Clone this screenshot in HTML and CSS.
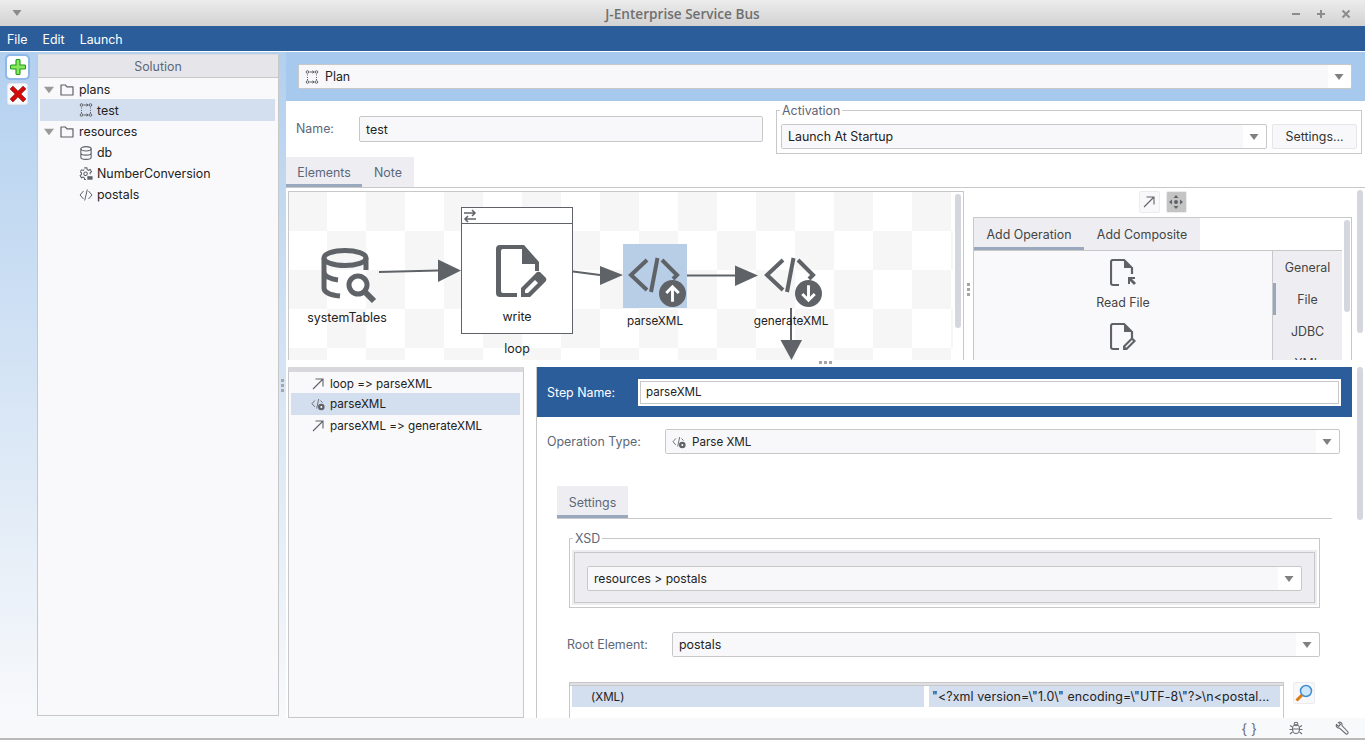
FILE: index.html
```html
<!DOCTYPE html>
<html lang="en">
<head>
    <meta charset="UTF-8">
    <meta name="viewport" content="width=device-width, initial-scale=1.0">
    <title>J-Enterprise Service Bus</title>
    <link rel="stylesheet" href="styles.css">
</head>
<body>
    <svg class="defs" width="0" height="0">
        <symbol id="i-caret" viewBox="0 0 12 8"><path d="M0 0h12L6 8z"/></symbol>
        <symbol id="i-plan" viewBox="0 0 14 14"><g fill="none" stroke="currentColor" stroke-width="1"><circle cx="2.500" cy="2" r="1.300"/><circle cx="11.500" cy="2" r="1.300"/><circle cx="2.500" cy="12" r="1.300"/><circle cx="11.500" cy="12" r="1.300"/><path d="M2.500 4.500v1M2.500 7v1M2.500 9v1M11.500 4.500v1M11.500 7v1M11.500 9v1M4.500 2h4.500M4.500 12h4.500M7.500 .8 9.300 2 7.500 3.200M7.500 10.800 9.300 12l-1.800 1.200"/></g></symbol>
        <symbol id="i-folder" viewBox="0 0 14 12"><path d="M1 11V1h4.300l1.700 1.800h6V11z" fill="none" stroke="currentColor" stroke-width="1.200" stroke-linejoin="round"/></symbol>
        <symbol id="i-db" viewBox="0 0 14 15"><g fill="none" stroke="currentColor" stroke-width="1.200"><ellipse cx="7" cy="3" rx="5.500" ry="2.300"/><path d="M1.500 3v9c0 1.300 2.500 2.300 5.500 2.300s5.500-1 5.500-2.300V3M1.500 7.500c0 1.300 2.500 2.300 5.500 2.300s5.500-1 5.500-2.300"/></g></symbol>
        <symbol id="i-gear" viewBox="0 0 16 16"><path d="M6 1h3l.4 2 1.600.8 1.800-1 1.500 2.400-1.500 1.400v1.800M1.500 5.200 3 3.200l1.800.7L6 3M1.400 5.300l1.400 1.300v2L1.300 9.800l1.500 2.500 1.800-.8 1.400.9.400 1.800H8" fill="none" stroke="currentColor" stroke-width="1.200"/><circle cx="7.500" cy="7.800" r="2" fill="none" stroke="currentColor" stroke-width="1.200"/><rect x="9.500" y="10.500" width="6" height="4" fill="currentColor"/></symbol>
        <symbol id="i-code" viewBox="0 0 14 12"><path d="M4.500 2 1 6l3.500 4M9.500 2 13 6l-3.500 4M8.300 .5 5.700 11.500" fill="none" stroke="currentColor" stroke-width="1"/></symbol>
        <symbol id="i-code-big" viewBox="0 0 52 36"><path d="M19 3 3 18l16 15M34 3l15 15-4 4M29.500 1 23 35" fill="none" stroke="currentColor" stroke-width="4"/></symbol>
        <symbol id="i-parse" viewBox="0 0 14 14"><path d="M3.800 3.500 1 6.700l2.800 3.200M9.500 3.500l2 2.200M7.700 2 5.700 11.500" fill="none" stroke="currentColor" stroke-width=".9"/><circle cx="10.300" cy="10" r="3.300" fill="currentColor"/><circle cx="10.300" cy="10" r="1" fill="#fff"/></symbol>
        <symbol id="i-arrow" viewBox="0 0 14 14"><path d="M2 12 12 2M4.500 2H12v7.500" fill="none" stroke="currentColor" stroke-width="1.100"/></symbol>
    </svg>

    <div class="window">
        <header class="titlebar">
            <svg class="title-menu"><use href="#i-caret"/></svg>
            <span class="title-text">J-Enterprise Service Bus</span>
            <div class="title-buttons">
                <svg viewBox="0 0 10 10"><path d="M1 5h8"/></svg>
                <svg viewBox="0 0 10 10"><path d="M1 5h8M5 1v8"/></svg>
                <svg viewBox="0 0 10 10"><path d="M1.500 1.500l7 7M8.500 1.500l-7 7"/></svg>
            </div>
        </header>

        <nav class="menubar">
            <span>File</span>
            <span>Edit</span>
            <span>Launch</span>
        </nav>

        <div class="main">
            <aside class="side-tools">
                <button class="tool tool-focus">
                    <svg viewBox="0 0 16 16"><path d="M6 1.500a1 1 0 0 1 1-1h2a1 1 0 0 1 1 1V6h4.500a1 1 0 0 1 1 1v2a1 1 0 0 1-1 1H10v4.500a1 1 0 0 1-1 1H7a1 1 0 0 1-1-1V10H1.500a1 1 0 0 1-1-1V7a1 1 0 0 1 1-1H6z" fill="#86e85a" stroke="#1f9a1c" stroke-width="1.100"/></svg>
                </button>
                <button class="tool">
                    <svg viewBox="0 0 16 16"><path d="M1 3.500 3.500 1 8 5.500 12.500 1 15 3.500 10.500 8l4.500 4.500-2.500 2.500L8 10.500 3.500 15 1 12.500 5.500 8z" fill="#d20a0a" stroke="#8a0000" stroke-width=".6"/></svg>
                </button>
            </aside>

            <section class="solution">
                <div class="solution-head">Solution</div>
                <ul class="tree">
                    <li><svg class="tree-caret"><use href="#i-caret"/></svg><svg class="ico"><use href="#i-folder"/></svg>plans</li>
                    <li class="selected child"><svg class="ico"><use href="#i-plan"/></svg>test</li>
                    <li><svg class="tree-caret"><use href="#i-caret"/></svg><svg class="ico"><use href="#i-folder"/></svg>resources</li>
                    <li class="child"><svg class="ico"><use href="#i-db"/></svg>db</li>
                    <li class="child"><svg class="ico"><use href="#i-gear"/></svg>NumberConversion</li>
                    <li class="child"><svg class="ico"><use href="#i-code"/></svg>postals</li>
                </ul>
            </section>

            <div class="vsplit"><i></i><i></i><i></i></div>

            <section class="content">
                <div class="plan-bar">
                    <div class="select plan-select">
                        <span class="select-text"><svg class="ico"><use href="#i-plan"/></svg>Plan</span>
                        <svg class="select-caret"><use href="#i-caret"/></svg>
                    </div>
                </div>

                <div class="plan-form">
                    <label class="field-label name-label">Name:</label>
                    <div class="input name-input">test</div>
                    <fieldset class="group activation">
                        <legend>Activation</legend>
                        <div class="select activation-select">
                            <span class="select-text">Launch At Startup</span>
                            <svg class="select-caret"><use href="#i-caret"/></svg>
                        </div>
                        <button class="btn">Settings...</button>
                    </fieldset>
                </div>

                <div class="tabs plan-tabs">
                    <span class="tab active">Elements</span>
                    <span class="tab">Note</span>
                </div>

                <div class="designer">
                    <div class="canvas">
                        <svg class="edges" width="676" height="168" viewBox="0 0 676 168">
                            <g fill="#5f6368" stroke="#5f6368">
                                <path d="M91 80 150 78.500" stroke-width="2" fill="none"/>
                                <path d="M150 67.500 173 78.500 150 90z" stroke="none"/>
                                <path d="M285 79.500 312 83" stroke-width="2" fill="none"/>
                                <path d="M312 74 335 83 312 93z" stroke="none"/>
                                <path d="M399 83.500H448" stroke-width="2" fill="none"/>
                                <path d="M447 73.500 470 83.500 447 94z" stroke="none"/>
                                <path d="M503 116V149" stroke-width="2" fill="none"/>
                                <path d="M492.500 148H514L503.500 168z" stroke="none"/>
                            </g>
                        </svg>

                        <div class="node node-tables">
                            <svg class="node-icon" viewBox="0 0 56 56" width="56" height="56">
                                <g fill="none" stroke="#5f6368" stroke-width="5">
                                    <ellipse cx="24" cy="10" rx="21" ry="7.500"/>
                                    <path d="M3 10v30c0 4 6 7 16 8M3 24c0 4 6 7 14 8M45 10v12"/>
                                    <circle cx="37" cy="37" r="9"/>
                                    <path d="M43.500 43.500 53 53" stroke-width="6"/>
                                </g>
                            </svg>
                            <span>systemTables</span>
                        </div>

                        <div class="loop">
                            <div class="loop-head">
                                <svg viewBox="0 0 14 14" width="14" height="14"><path d="M1 4h10M9 1l3 3-3 3M13 10H3M5 7l-3 3 3 3" fill="none" stroke="#5f6368" stroke-width="1.500"/></svg>
                            </div>
                            <div class="loop-body">
                                <svg class="node-icon" viewBox="0 0 52 54" width="52" height="54">
                                    <path d="M5 1h24l15 17v9h-4V20H27V5H8a2 2 0 0 0-2 2v40a2 2 0 0 0 2 2h14v4H5a4 4 0 0 1-4-4V5a4 4 0 0 1 4-4z" fill="#5f6368"/>
                                    <path d="M26 53v-9l15-15a3 3 0 0 1 5 0l4 4a3 3 0 0 1 0 5L35 53z" fill="#5f6368"/>
                                    <path d="M30 49v-3l10-10 3 3-10 10z" fill="#fff"/>
                                </svg>
                                <span>write</span>
                            </div>
                        </div>
                        <span class="loop-name">loop</span>

                        <div class="node node-parse">
                            <div class="node-selected">
                                <svg class="code-big"><use href="#i-code-big"/></svg>
                                <svg class="badge" viewBox="0 0 26 26"><circle cx="13" cy="13" r="13" fill="#5f6368"/><path d="M13 21V7M7 12.500 13 6.500l6 6" fill="none" stroke="#fff" stroke-width="2.800"/></svg>
                            </div>
                            <span>parseXML</span>
                        </div>

                        <div class="node node-generate">
                            <div class="node-plain">
                                <svg class="code-big"><use href="#i-code-big"/></svg>
                                <svg class="badge" viewBox="0 0 26 26"><circle cx="13" cy="13" r="13" fill="#5f6368"/><path d="M13 5v14M7 13.500l6 6 6-6" fill="none" stroke="#fff" stroke-width="2.800"/></svg>
                            </div>
                            <span>generateXML</span>
                        </div>

                        <div class="canvas-gutter"></div>
                        <div class="scroll canvas-scroll"></div>
                    </div>

                    <div class="grip"><i></i><i></i><i></i></div>

                    <div class="palette-side">
                        <div class="palette-tools">
                            <button class="mini">
                                <svg viewBox="0 0 14 14"><use href="#i-arrow"/></svg>
                            </button>
                            <button class="mini mini-on">
                                <svg viewBox="0 0 14 14"><path d="M7 0 9.500 3h-5zM7 14l-2.500-3h5zM0 7l3-2.500v5zM14 7l-3 2.500v-5z" fill="#5f6368"/><circle cx="7" cy="7" r="2" fill="#5f6368"/></svg>
                            </button>
                        </div>
                        <div class="palette">
                            <div class="palette-inner">
                                <div class="tabs palette-tabs">
                                    <span class="tab active">Add Operation</span>
                                    <span class="tab">Add Composite</span>
                                </div>
                                <div class="palette-body">
                                    <div class="ops">
                                        <div class="op">
                                            <svg viewBox="0 0 26 28" width="26" height="28"><path d="M9 26H3a2 2 0 0 1-2-2V3a2 2 0 0 1 2-2h11l8 8v6" fill="none" stroke="#5f6368" stroke-width="2.200"/><path d="M14 9h8l-8-8z" fill="#5f6368"/><path d="M18 18h7v2h-3l4 4-2 2-4-4v3h-2z" fill="#5f6368"/></svg>
                                            <span>Read File</span>
                                        </div>
                                        <div class="op">
                                            <svg viewBox="0 0 26 28" width="26" height="28"><path d="M9 26H3a2 2 0 0 1-2-2V3a2 2 0 0 1 2-2h11l8 8v6" fill="none" stroke="#5f6368" stroke-width="2.200"/><path d="M14 9h8l-8-8z" fill="#5f6368"/><path d="M13 27v-4l9-9 4 4-9 9z" fill="#5f6368"/><path d="M15.500 24.500v-1l6.500-6.500 1 1-6.500 6.500z" fill="#f9f9fb"/></svg>
                                        </div>
                                    </div>
                                    <div class="op-tabs">
                                        <span>General</span>
                                        <span class="active">File</span>
                                        <span>JDBC</span>
                                        <span>XML</span>
                                    </div>
                                </div>
                            </div>
                            <div class="scroll palette-scroll"></div>
                        </div>
                    </div>
                    <div class="scroll outer-scroll"></div>
                </div>

                <div class="hsplit"><i></i><i></i><i></i></div>

                <div class="lower">
                    <ul class="steps">
                        <li><svg class="ico"><use href="#i-arrow"/></svg>loop =&gt; parseXML</li>
                        <li class="selected"><svg class="ico"><use href="#i-parse"/></svg>parseXML</li>
                        <li><svg class="ico"><use href="#i-arrow"/></svg>parseXML =&gt; generateXML</li>
                    </ul>

                    <div class="step">
                        <div class="step-head">
                            <label>Step Name:</label>
                            <div class="step-input"><div>parseXML</div></div>
                        </div>

                        <div class="op-type">
                            <label class="field-label">Operation Type:</label>
                            <div class="select op-select">
                                <span class="select-text"><svg class="ico"><use href="#i-parse"/></svg>Parse XML</span>
                                <svg class="select-caret"><use href="#i-caret"/></svg>
                            </div>
                        </div>

                        <div class="tabs settings-tabs">
                            <span class="tab active">Settings</span>
                        </div>

                        <fieldset class="group xsd">
                            <legend>XSD</legend>
                            <div class="xsd-inner">
                                <div class="select">
                                    <span class="select-text">resources &gt; postals</span>
                                    <svg class="select-caret"><use href="#i-caret"/></svg>
                                </div>
                            </div>
                        </fieldset>

                        <div class="root-row">
                            <label class="field-label">Root Element:</label>
                            <div class="select root-select">
                                <span class="select-text">postals</span>
                                <svg class="select-caret"><use href="#i-caret"/></svg>
                            </div>
                        </div>

                        <div class="xml-row">
                            <div class="xml-table">
                                <div class="xml-head"></div>
                                <div class="xml-cells">
                                    <span class="xml-name">(XML)</span>
                                    <span class="xml-value">"&lt;?xml version=\"1.0\" encoding=\"UTF-8\"?&gt;\n&lt;postal...</span>
                                </div>
                            </div>
                            <button class="mini lens">
                                <svg viewBox="0 0 18 18" width="18" height="18"><circle cx="11" cy="7" r="5.500" fill="#cfe6fb" stroke="#3d8fd1" stroke-width="1.500"/><path d="M7 11 1.500 16.500" stroke="#e07a12" stroke-width="3" fill="none"/></svg>
                            </button>
                        </div>
                    </div>

                    <div class="scroll lower-scroll"></div>
                </div>
            </section>
        </div>

        <footer class="statusbar">
            <span class="status-braces">{ }</span>
            <svg viewBox="0 0 14 14" width="14" height="14"><g fill="none" stroke="#6b6f75" stroke-width="1.100"><ellipse cx="7" cy="8" rx="3.500" ry="4.500"/><circle cx="7" cy="3" r="1.800"/><path d="M3.500 6 1 4.500M10.500 6 13 4.500M3.500 8.500H.5M10.500 8.500h3M3.500 11 1 13M10.500 11l2.500 2M3.500 8h7"/></g></svg>
            <svg viewBox="0 0 14 14" width="14" height="14"><path d="M1.500 3.500 3.500 5.500 5.500 3.500 3.500 1.500C5.500.5 7.500 2 7 4.500L13 11c.5 1-.8 2.500-2 2L4.500 7C2.500 7.500.5 5.500 1.500 3.500z" fill="none" stroke="#6b6f75" stroke-width="1.100"/></svg>
        </footer>
    </div>
</body>
</html>
```

FILE: styles.css
```css
* {
    box-sizing: border-box;
}

html,
body {
    margin: 0;
    height: 100%;
    overflow: hidden;
}

body {
    font-family: Inter, "Open Sans", sans-serif;
    font-size: 12.4px;
    font-variant-ligatures: none;
    font-feature-settings: "calt" 0;
    color: #222;
    background: #fff;
}

ul {
    list-style: none;
    margin: 0;
    padding: 0;
}

button {
    font: inherit;
    padding: 0;
}

.defs {
    position: absolute;
}

.window {
    display: flex;
    flex-direction: column;
    height: 740px;
    border-bottom: 2px solid #b9b9b9;
}

/* title and menu */
.titlebar {
    position: relative;
    height: 26px;
    flex: none;
    display: flex;
    align-items: center;
    justify-content: center;
    background: linear-gradient(#ececec, #d2d2d2);
}

.title-text {
    font-family: "Open Sans", sans-serif;
    font-weight: 600;
    font-size: 13.6px;
    color: #707070;
}

.title-menu {
    position: absolute;
    left: 12px;
    top: 10px;
    width: 10px;
    height: 6px;
    fill: #8b8b8b;
}

.title-buttons {
    position: absolute;
    right: 14px;
    top: 9px;
    display: flex;
    gap: 15px;
}

.title-buttons svg {
    width: 10px;
    height: 10px;
    fill: none;
    stroke: #8c8c8c;
    stroke-width: 2;
}

.menubar {
    height: 25px;
    flex: none;
    display: flex;
    align-items: center;
    gap: 15px;
    padding: 1px 0 0 7px;
    background: #2c5d9b;
    color: #fff;
}

.main {
    flex: 1;
    min-height: 0;
    display: flex;
    margin-top: 1px;
    background: linear-gradient(#b3d0ef, #f8f9fb);
}

/* left column */
.side-tools {
    width: 37px;
    flex: none;
    display: flex;
    flex-direction: column;
    align-items: flex-start;
    gap: 5px;
    padding: 4px 0 0 7px;
}

.tool {
    width: 21px;
    height: 22px;
    display: flex;
    align-items: center;
    justify-content: center;
    background: #f8f9fb;
    border: 1px solid #e4e7ec;
    border-radius: 3px;
}

.tool svg {
    width: 18px;
    height: 18px;
}

.tool-focus {
    background: #fff;
    box-shadow: 0 0 0 2px #8fb8e8;
    border-color: #fff;
}

.tool-focus svg {
    width: 16px;
    height: 16px;
}

.solution {
    width: 242px;
    flex: none;
    margin: 2px 0;
    background: #f9f9fb;
    border: 1px solid #c8c8c8;
    border-top-color: #dcdcdc;
    display: flex;
    flex-direction: column;
}

.solution-head {
    height: 23px;
    flex: none;
    text-align: center;
    line-height: 23px;
    color: #5c6779;
    background: #e6e6ea;
    border-bottom: 1px solid #c8c8c8;
}

.tree {
    padding: 1px 3px 0 2px;
}

.tree li {
    height: 21px;
    display: flex;
    align-items: center;
    padding-left: 4px;
    white-space: nowrap;
}

.tree li.child {
    padding-left: 39px;
}

.tree li.selected {
    background: #d3deef;
    height: 22px;
    margin-top: -1px;
}

.tree-caret {
    width: 10px;
    height: 8px;
    margin-right: 6px;
    fill: #9a9a9a;
}

.ico {
    width: 14px;
    height: 14px;
    flex: none;
    margin-right: 6px;
    color: #5f6368;
}

.tree .ico {
    margin-right: 4px;
}

.tree-caret + .ico {
    margin-right: 5px;
}

.vsplit {
    width: 7px;
    flex: none;
    display: flex;
    flex-direction: column;
    justify-content: center;
    align-items: center;
    gap: 2px;
}

.vsplit i,
.grip i {
    width: 3px;
    height: 3px;
    background: #a6a6a6;
}

/* right side */
.content {
    flex: 1;
    min-width: 0;
    display: flex;
    flex-direction: column;
    background: #fff;
}

.plan-bar {
    height: 49px;
    flex: none;
    padding: 12px 13px 0 12px;
    background: #a6c9ed;
}

.select {
    height: 25px;
    display: flex;
    align-items: center;
    justify-content: space-between;
    background: #fff;
    border: 1px solid #c8c8c8;
    border-radius: 2px;
}

.select-text {
    flex: 1;
    height: 100%;
    display: flex;
    align-items: center;
    padding-left: 6px;
    background: #f8f8fa;
}

.select-caret {
    width: 10px;
    height: 6px;
    margin: 0 7px 0 6px;
    fill: #808080;
}

.plan-form {
    height: 56px;
    flex: none;
    display: flex;
    align-items: flex-start;
    padding-left: 10px;
}

.field-label {
    color: #5c6779;
}

.name-label {
    width: 63px;
    margin-top: 20px;
}

.input {
    height: 26px;
    padding-left: 6px;
    display: flex;
    align-items: center;
    background: #f8f8fa;
    border: 1px solid #c8c8c8;
    border-radius: 2px;
}

.name-input {
    width: 404px;
    margin-top: 15px;
}

.group {
    margin: 0;
    padding: 0;
    border: 1px solid #c8c8c8;
    min-width: 0;
}

.group legend {
    padding: 0 2px;
    margin-left: -1px;
    color: #5c6779;
    line-height: 13px;
}

.activation {
    width: 586px;
    height: 50px;
    margin: 3px 0 0 13px;
    display: flex;
    gap: 5px;
    padding: 7px 4px 0 4px;
}

.activation-select {
    width: 487px;
}

.btn {
    width: 85px;
    height: 25px;
    background: #f8f8fa;
    border: 1px solid #e6e6ea;
    border-radius: 2px;
    color: #333;
}

.tabs {
    display: flex;
    flex: none;
}

.tab {
    display: flex;
    align-items: center;
    justify-content: center;
    background: #eeeef2;
    color: #5c6779;
}

.tab.active {
    box-shadow: inset 0 -3px #9aa8bd;
}

.plan-tabs {
    height: 31px;
    border-bottom: 1px solid #c8c8c8;
}

.plan-tabs .tab {
    width: 76px;
}

.plan-tabs .tab + .tab {
    width: 52px;
}

.designer {
    position: relative;
    height: 172px;
    flex: none;
    display: flex;
    padding: 4px 0 0 2px;
    overflow: hidden;
}

.canvas {
    position: relative;
    width: 676px;
    height: 168px;
    flex: none;
    overflow: hidden;
    background-color: #fff;
    background-image: conic-gradient(#f6f6f6 25%, #fff 25% 50%, #f6f6f6 50% 75%, #fff 75%);
    background-size: 78px 78px;
    background-position: 39px 0;
    box-shadow: 0 -1px #c8c8c8;
}

.canvas::before {
    content: "";
    position: absolute;
    left: 0;
    top: 0;
    bottom: 0;
    width: 1px;
    background: #c8c8c8;
}

.canvas-gutter {
    position: absolute;
    right: 0;
    top: 0;
    width: 11px;
    height: 100%;
    background: #fff;
    border-right: 1px solid #c8c8c8;
}

.edges {
    position: absolute;
    left: 0;
    top: 0;
}

.node {
    position: absolute;
    display: flex;
    flex-direction: column;
    align-items: center;
}

.node-icon {
    display: block;
}

.node-tables {
    left: 9px;
    top: 56px;
    width: 100px;
    gap: 6px;
}

.node-tables .node-icon {
    margin-left: 4px;
}

.loop {
    position: absolute;
    left: 173px;
    top: 15px;
    width: 112px;
    height: 127px;
    border: 1px solid #5f6368;
    background: #fff;
}

.loop-head {
    height: 16px;
    padding-left: 1px;
    border-bottom: 1px solid #5f6368;
    display: flex;
    align-items: center;
}

.loop-head svg {
    display: block;
}

.loop-body {
    display: flex;
    flex-direction: column;
    align-items: center;
    gap: 11px;
    padding-top: 20px;
}

.loop-body .node-icon {
    margin-left: 8px;
}

.loop-name {
    position: absolute;
    left: 173px;
    top: 149px;
    width: 112px;
    text-align: center;
}

.node-parse {
    left: 329px;
    top: 52px;
    width: 76px;
    gap: 6px;
    font-size: 11.7px;
}

.node-generate {
    left: 453px;
    top: 52px;
    width: 100px;
    gap: 6px;
    font-size: 11.8px;
}

.node-selected,
.node-plain {
    position: relative;
    width: 64px;
    height: 64px;
    color: #5f6368;
}

.node-selected {
    background: #b7cee6;
}

.code-big {
    position: absolute;
    left: 5px;
    top: 13px;
    width: 52px;
    height: 36px;
}

.badge {
    position: absolute;
    left: 36px;
    top: 36px;
    width: 27px;
    height: 27px;
}

.scroll {
    position: absolute;
    width: 6px;
    background: #d4d7dd;
    border-radius: 3px;
}

.canvas-scroll {
    left: 667px;
    top: 2px;
    height: 134px;
}

.grip {
    width: 9px;
    flex: none;
    display: flex;
    flex-direction: column;
    justify-content: center;
    align-items: center;
    gap: 2px;
    padding-top: 26px;
}

.palette-side {
    width: 379px;
    flex: none;
    display: flex;
    flex-direction: column;
}

.palette-tools {
    height: 25px;
    flex: none;
    margin-top: -1px;
    margin-bottom: 1px;
    display: flex;
    justify-content: center;
    align-items: flex-start;
    gap: 6px;
}

.mini {
    width: 21px;
    height: 22px;
    display: flex;
    align-items: center;
    justify-content: center;
    background: #f8f8fa;
    border: 1px solid #ececf0;
    border-radius: 2px;
    color: #5f6368;
}

.mini svg {
    width: 14px;
    height: 14px;
}

.mini-on {
    background: #c4c4c4;
}

.palette {
    position: relative;
    height: 143px;
    flex: none;
    border: 1px solid #c8c8c8;
    border-bottom: 0;
    overflow: hidden;
}

.palette-inner {
    width: 368px;
}

.palette-tabs {
    height: 33px;
    border-bottom: 1px solid #c8c8c8;
}

.palette-tabs .tab {
    width: 110px;
    padding-top: 1px;
    color: #444;
}

.palette-tabs .tab + .tab {
    width: 116px;
}

.palette-body {
    display: flex;
    background: #f9f9fb;
    height: 120px;
}

.ops {
    flex: 1;
    display: flex;
    flex-direction: column;
    align-items: center;
    padding-top: 8px;
    gap: 13px;
    color: #444;
}

.op {
    display: flex;
    flex-direction: column;
    align-items: center;
    gap: 8px;
}

.op-tabs {
    width: 70px;
    display: flex;
    flex-direction: column;
    background: #eeeef2;
    border-left: 1px solid #c8c8c8;
    color: #444;
}

.op-tabs span {
    height: 32px;
    flex: none;
    display: flex;
    align-items: center;
    justify-content: center;
}

.op-tabs .active {
    box-shadow: inset 3px 0 #9aa8bd;
}

.palette-scroll {
    right: 1px;
    top: 2px;
    height: 92px;
}

.outer-scroll {
    left: 1071px;
    top: 2px;
    height: 143px;
}

.hsplit {
    height: 7px;
    flex: none;
    display: flex;
    justify-content: center;
    gap: 2px;
    padding: 1px 0 0 0;
}

.hsplit i {
    width: 3px;
    height: 3px;
    background: #a6a6a6;
}

.lower {
    position: relative;
    flex: 1;
    min-height: 0;
    display: flex;
    padding-left: 2px;
    overflow: hidden;
}

.steps {
    width: 236px;
    flex: none;
    padding: 1px 3px 0 2px;
    font-size: 11.7px;
    background: #f9f9fb;
    border: 1px solid #c8c8c8;
    border-top: 5px solid #d8d8dc;
}

.steps li {
    height: 21px;
    display: flex;
    align-items: center;
    padding-left: 20px;
    white-space: nowrap;
}

.steps li.selected {
    background: #d3deef;
    height: 22px;
    margin-top: -1px;
}

.steps .ico {
    margin-right: 5px;
}

.step {
    width: 816px;
    flex: none;
    margin-left: 12px;
    border-left: 1px solid #c8c8c8;
}

.step-head {
    height: 50px;
    display: flex;
    align-items: center;
    padding: 0 11px 0 10px;
    background: #2c5d9b;
    color: #fff;
}

.step-head label {
    width: 91px;
    flex: none;
}

.step-input {
    flex: 1;
    height: 27px;
    padding: 2px;
    background: #fff;
}

.step-input div {
    height: 100%;
    padding-left: 5px;
    display: flex;
    align-items: center;
    border: 1px solid #c8c8c8;
    color: #222;
    font-size: 11.6px;
}

.op-type {
    display: flex;
    align-items: center;
    padding: 12px 12px 0 10px;
}

.op-type label {
    width: 118px;
    flex: none;
}

.op-select {
    flex: 1;
    font-size: 11.6px;
}

.settings-tabs {
    height: 33px;
    margin: 32px 20px 0 20px;
    border-bottom: 1px solid #c8c8c8;
}

.settings-tabs .tab {
    width: 71px;
    padding-top: 1px;
}

.xsd {
    height: 76px;
    margin: 13px 32px 0 32px;
    padding: 7px 4px 0;
}

.xsd-inner {
    height: 51px;
    padding: 13px 12px 0;
    font-size: 12.1px;
    background: #ededf1;
    border: 1px solid #c8c8c8;
    box-shadow: 0 0 0 2px #ededf1;
}

.root-row {
    display: flex;
    align-items: center;
    margin: 24px 32px 0 30px;
}

.root-row label {
    width: 105px;
    flex: none;
}

.root-select {
    flex: 1;
}

.xml-row {
    position: relative;
    display: flex;
    gap: 9px;
    margin: 25px 0 0 32px;
}

.xml-table {
    width: 715px;
    height: 40px;
    border: 1px solid #c8c8c8;
    border-top: 0;
    border-bottom: 0;
}

.xml-head {
    height: 4px;
    background: #e0e0e4;
    border-top: 1px solid #c8c8c8;
    border-bottom: 1px solid #c8c8c8;
}

.xml-cells {
    display: flex;
    gap: 5px;
    padding: 0 2px;
}

.xml-name,
.xml-value {
    height: 21px;
    display: flex;
    align-items: center;
    background: #d3deef;
    white-space: nowrap;
}

.xml-name {
    width: 352px;
    padding-left: 19px;
    font-size: 11.6px;
}

.xml-value {
    width: 351px;
    padding-left: 3px;
    letter-spacing: .12px;
}

.lens {
    flex: none;
    width: 22px;
    height: 22px;
}

.lens svg {
    width: 18px;
    height: 18px;
}

.lower-scroll {
    left: 1071px;
    top: 0;
    height: 153px;
}

.statusbar {
    height: 20px;
    flex: none;
    display: flex;
    align-items: center;
    justify-content: flex-end;
    gap: 32px;
    padding-right: 16px;
    background: #f8f9fb;
    color: #6b6f75;
}

.status-braces {
    font-size: 14px;
}
```
